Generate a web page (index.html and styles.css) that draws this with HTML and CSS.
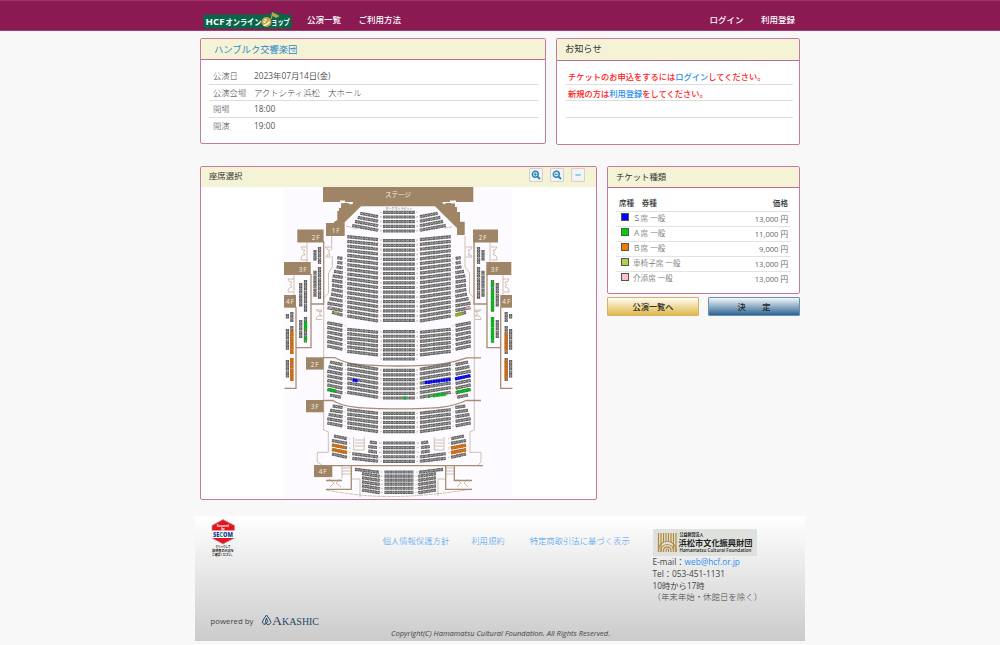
FILE: index.html
```
<!DOCTYPE html>
<html lang="ja">
<head>
<meta charset="utf-8">
<title>HCFオンラインショップ</title>
<link rel="stylesheet" href="styles.css">
</head>
<body>
<header class="topbar">
  <div class="topbar-inner">
    <svg class="logo" width="90" height="20" viewBox="0 0 90 20">
      <rect x="0.5" y="4.5" width="88" height="14" rx="2" fill="#086548"/>
      <path d="M65 6 Q68 0 73 2 L78 4 L84 5 L86 8 L66 8Z" fill="#086548"/>
      <circle cx="63.500" cy="12" r="5" fill="#c5a34c"/>
      <path d="M69 2.500L76 6L73 7.500L69.500 5.500L67.500 10" fill="#c5a34c" stroke="#c5a34c" stroke-width=".8"/>
      <g class="logo-text">
        <text x="2.5" y="14.8" textLength="19" lengthAdjust="spacingAndGlyphs">HCF</text>
        <text x="22.5" y="14.8" textLength="36" lengthAdjust="spacingAndGlyphs">オンライン</text>
        <text x="59.5" y="14.8" textLength="8" lengthAdjust="spacingAndGlyphs">シ</text>
        <text x="68.3" y="14.8" textLength="18.5" lengthAdjust="spacingAndGlyphs">ョップ</text>
      </g>
    </svg>
    <nav class="nav"><a>公演一覧</a><a>ご利用方法</a></nav>
    <nav class="nav nav-right"><a>ログイン</a><a>利用登録</a></nav>
  </div>
</header>

<main class="page">
  <div class="row row-info">
    <section class="panel event">
      <h2 class="panel-head event-title">ハンブルク交響楽団</h2>
      <dl class="facts">
        <div><dt>公演日</dt><dd class="num">2023年07月14日(金)</dd></div>
        <div><dt>公演会場</dt><dd>アクトシティ浜松　大ホール</dd></div>
        <div><dt>開場</dt><dd class="num">18:00</dd></div>
        <div><dt>開演</dt><dd class="num">19:00</dd></div>
      </dl>
    </section>
    <section class="panel news">
      <h2 class="panel-head">お知らせ</h2>
      <ul class="news-list">
        <li>チケットのお申込をするには<a>ログイン</a>してください。</li>
        <li>新規の方は<a>利用登録</a>をしてください。</li>
        <li></li>
      </ul>
    </section>
  </div>

  <div class="row row-seat">
    <section class="panel seats">
      <div class="panel-head seat-head">
        <h2>座席選択</h2>
        <div class="tools">
          <button><svg width="10" height="10" viewBox="0 0 10 10"><circle cx="4.3" cy="4.3" r="3" class="glass"/><path d="M6.6 6.6L9 9" class="handle"/><path d="M2.8 4.3H5.8M4.3 2.8V5.8" class="sign"/></svg></button>
          <button><svg width="10" height="10" viewBox="0 0 10 10"><circle cx="4.3" cy="4.3" r="3" class="glass"/><path d="M6.6 6.6L9 9" class="handle"/><path d="M2.8 4.3H5.8" class="sign"/></svg></button>
          <button><svg width="10" height="10" viewBox="0 0 10 10"><path d="M2.4 5H7.6" class="minus"/></svg></button>
        </div>
      </div>
      <svg class="map" id="map" width="228" height="311" viewBox="284 187 228 311">
        <rect x="284" y="187" width="228" height="311" fill="#fdfbff"/>
        <g class="thin">
          <path d="M331.7 236V250M332.3 256V267L328.5 273V293L323.7 298M323.7 304V430L328.3 431.7V452.3H317.3V462L322 465"/>
          <path d="M465 236V267L469.5 273V293L474 298M474.3 242V430L470 431.7V452.3H481V462L478 465"/>
          <path d="M301 247H307M301 247Q302 251 305 250Q302 252 305 255Q301 254 301 260H307M307 242V262M325 247H331M326 247Q327 251 330 250Q327 252 330 255Q326 254 326 257H331"/>
          <path d="M497 247H491M497 247Q496 251 493 250Q496 252 493 255Q497 254 497 260H491M490 242V262M472 247H466M472 247Q471 251 468 250Q471 252 468 255Q472 254 472 257H466"/>
          <path d="M288 279H294M288 279Q289 283 292 282Q289 285 292 287Q288 287 288 292H293M294 275V295M509 279H503M509 279Q508 283 505 282Q508 285 505 287Q509 287 509 292H504M503 275V295"/>
          <path d="M316 310H322M316 310Q319 313 322 311Q317 314 322 316Q316 315 316 319.500H322M481 310H475M481 310Q478 313 475 311Q480 314 475 316Q481 315 481 319.500H475"/>
          <path d="M353.7 437V450H364.3V437M355 440H364M355 443H364M355 446H364M434.3 437V450H444V437M435 440H443M435 443H443M435 446H443"/>
          <path d="M342 465V478M342 468H351M342 471H351M342 474H351M445.7 468H454M445.7 471H454M445.7 474H454"/>
          <path d="M351.5 479H360V497M445 479H438V496M329 479L334 483L330 487M340 479L336 483L341 487M457 479L461 483L457 487M468 479L464 483L468 487"/>
          <path d="M326 490Q365 497.500 399 496.500T472 489M346 226L357 229M444 228L452 227" stroke-dasharray="4 .7"/>
        </g>
        <g class="wall">
          <path d="M323.7 241V304H311.5M311 274V347.7H296M296 307V388.3H284.5"/>
          <path d="M474 241V304H486.7M487 274V347.7H500.5M500.7 307V388.3H512.5"/>
          <path d="M323 357.7H335C346 364 360 366 399 366S452 363 466.7 357.8H481"/>
          <path d="M323 400.5H333C342 407 360 408.8 399 408.8S453 407 466 400.5H481"/>
          <path d="M314 465.6H483M351.3 466V489.3H326M326 480.500H342M445.7 466V489.3H472M454.3 466V480.500H472"/>
        </g>
        <path class="block" d="M323 187V202H341V208H339V211H337.3V220L334 222V223H326V236H344.7V222.3L361 206.3H435L457 228V235H464.7V221.7H460V212H457V207H455V202H473.3V187Z"/>
        <path d="M340 200.5H345V202H353V203.5L350.5 204.5L348 203H344L340 203.5ZM442 202H450V200.5H456V203.5H451V203H446L444 204.5Z" fill="#fdfbff"/>
        <g class="block">
          <rect x="297.3" y="229.5" width="26.3" height="13"/><rect x="473" y="229.5" width="25" height="13"/>
          <rect x="284" y="262" width="26.7" height="13"/><rect x="486.3" y="262" width="25" height="13"/>
          <rect x="284" y="295" width="12" height="12.7"/><rect x="500.3" y="295" width="11.7" height="12.7"/>
          <rect x="306" y="357.3" width="17.7" height="12.3"/><rect x="306" y="400" width="17.7" height="12.3"/>
          <rect x="314" y="465.3" width="18.3" height="11.8"/>
        </g>
        <g id="seats"></g>
        <g class="map-label">
          <text x="398" y="197" textLength="26">ステージ</text>
          <text x="336" y="232.5">1F</text><text x="316" y="240">2F</text><text x="483" y="240">2F</text>
          <text x="303" y="272">3F</text><text x="495" y="272">3F</text>
          <text x="290.3" y="304">4F</text><text x="506.7" y="304">4F</text>
          <text x="315" y="366.5">2F</text><text x="315" y="409">3F</text><text x="323" y="474">4F</text>
        </g>
        <text x="399" y="210" class="pit">オーケストラピット</text>
      </svg>
    </section>

    <aside class="side">
      <section class="panel tickets">
        <h2 class="panel-head">チケット種類</h2>
        <table class="prices">
          <thead><tr><th>席種　券種</th><th>価格</th></tr></thead>
          <tbody>
            <tr><td><i class="chip chip-s"></i>Ｓ席 一般</td><td>13,000 円</td></tr>
            <tr><td><i class="chip chip-a"></i>Ａ席 一般</td><td>11,000 円</td></tr>
            <tr><td><i class="chip chip-b"></i>Ｂ席 一般</td><td>9,000 円</td></tr>
            <tr><td><i class="chip chip-w"></i>車椅子席 一般</td><td>13,000 円</td></tr>
            <tr><td><i class="chip chip-c"></i>介添席 一般</td><td>13,000 円</td></tr>
          </tbody>
        </table>
      </section>
      <div class="actions">
        <button class="btn btn-back">公演一覧へ</button>
        <button class="btn btn-ok">決　　定</button>
      </div>
    </aside>
  </div>
</main>

<footer class="footer">
  <div class="foot-left">
    <svg width="26" height="40" viewBox="0 0 26 40">
      <path d="M12 .5L23.500 6.500V19L12 25L1 19V6.500Z" fill="#e6141e" stroke="#a99" stroke-width=".7"/>
      <rect x=".5" y="11.500" width="23.500" height="7.500" fill="#fff"/>
      <text x="12" y="7.500" class="seal-top">Secured</text><text x="12" y="10.700" class="seal-top">by</text>
      <text x="2" y="17.600" class="seal-name" textLength="20" lengthAdjust="spacingAndGlyphs">SE<tspan fill="#0a9b7a">C</tspan>OM</text>
      <text x="12" y="28.800" class="seal-note" textLength="15" lengthAdjust="spacingAndGlyphs">クリックして</text>
      <text x="12" y="32.800" class="seal-note" textLength="22" lengthAdjust="spacingAndGlyphs">証明書の内容を</text>
      <text x="12" y="36.800" class="seal-note" textLength="22" lengthAdjust="spacingAndGlyphs">ご確認ください。</text>
    </svg>
    <div class="powered"><span>powered by</span>
      <svg width="60" height="13" viewBox="0 0 60 13">
        <path d="M5.500 1C4 4 1 6 1.500 9Q2.500 11 5 10Q8 8 5.500 4Q4 7 5 10M5.500 1Q9 5 10 8.500Q9 11 6 10.500" fill="none" stroke="#274766" stroke-width="1"/>
        <g class="akashic"><text x="11" y="10.500" font-size="12" textLength="10" lengthAdjust="spacingAndGlyphs">A</text><text x="21" y="10.500" font-size="9.300" textLength="37" lengthAdjust="spacingAndGlyphs">KASHIC</text></g>
      </svg>
    </div>
  </div>
  <div class="foot-mid">
    <nav class="foot-links"><a>個人情報保護方針</a><a>利用規約</a><a>特定商取引法に基づく表示</a></nav>
    <p class="copyright">Copyright(C) Hamamatsu Cultural Foundation. All Rights Reserved.</p>
  </div>
  <address class="contact">
    <svg width="104" height="27" viewBox="0 0 104 27">
      <rect width="104" height="27" fill="#dfe1dd"/>
      <g fill="none" stroke="#b18a3e" stroke-width="1.200">
        <path d="M5.500 4V23M8 4V23M10.500 4V14M13 4V12M15.500 4V12M18 4V14M20.500 4V23M23 4V23"/>
        <path d="M5.500 23V21A8.700 8.700 0 0 1 23 21V23M8 23V21A6.300 6.300 0 0 1 20.500 21V23M10.500 23V21A3.800 3.800 0 0 1 18 21V23M13 23V21A1.200 1.200 0 0 1 15.500 21V23"/>
      </g>
      <g class="hcf">
        <text x="26.500" y="7.300" font-size="4.200" textLength="24" lengthAdjust="spacingAndGlyphs">公益財団法人</text>
        <text x="25.500" y="16.600" font-size="8.400" textLength="74" lengthAdjust="spacingAndGlyphs">浜松市文化振興財団</text>
        <text x="26.500" y="23" font-size="4.800" textLength="72" lengthAdjust="spacingAndGlyphs">Hamamatsu Cultural Foundation</text>
      </g>
    </svg>
    <p>E-mail：<a>web@hcf.or.jp</a></p>
    <p>Tel：053-451-1131</p>
    <p>10時から17時</p>
    <p class="closed">（年末年始・休館日を除く）</p>
  </address>
</footer>
<script src="seats.js"></script>
</body>
</html>
```

FILE: styles.css
```
* { box-sizing: border-box; margin: 0; padding: 0; }
body {
  background: #f8f8f8;
  color: #444;
  font: 300 8.3px/12px "Open Sans", "Noto Sans CJK JP", sans-serif;
}
h2 { font-weight: 400; }
ul { list-style: none; }
svg { display: block; overflow: visible; }

.topbar { height: 31px; background: #8b1a53; border-top: 1px solid #98366a; border-bottom: 1px solid #a13c70; }
.topbar-inner { display: flex; align-items: flex-start; width: 610px; margin: 0 auto; padding: 9px 10px 0 8px; }
.logo-text { font: 700 8.5px "Open Sans", "Noto Sans CJK JP", sans-serif; fill: #fff; }
.nav { display: flex; gap: 17.5px; padding: 2.5px 0 0 14px; color: #fff; font-size: 8.5px; line-height: 14px; font-weight: 500; }
.nav-right { margin-left: auto; }

.page { width: 600px; margin: 7px auto 0 200px; }
.row { display: flex; align-items: flex-start; }
.row-info { gap: 10px; height: 128px; }
.row-seat { gap: 10px; height: 350px; }
.panel { background: #fff; border: 1px solid #c57b9f; border-radius: 2px; }
.panel-head { height: 21px; padding: 0 8px; background: #f4f3d5; border-bottom: 1px solid #bd6c94; color: #333; font-size: 8.4px; line-height: 19px; }

.event { width: 346px; height: 106px; }
.event-title { padding-left: 13px; font-size: 9.3px; line-height: 22px; color: #2f88cb; }
.facts { padding: 8px 6px 0 8px; }
.facts div { display: flex; height: 16.6px; padding-left: 4px; border-bottom: 1px solid #ddd; line-height: 15.5px; }
.facts div:last-child { border: 0; }
.facts dt { width: 41px; }
.facts dd { font-size: 8.35px; }
.facts .num { font-weight: 400; color: #555; }

.news { width: 244px; height: 107px; }
.news .panel-head { font-size: 9.2px; height: 22px; line-height: 20px; }
.news-list { padding: 7px 6px 0 9px; }
.news-list li { height: 16.7px; padding-left: 2px; border-bottom: 1px solid #ddd; line-height: 17px; font-size: 8.25px; font-weight: 500; color: #ff2020; white-space: nowrap; }
.news-list a { color: #1e8cf0; }

.seats { width: 397px; height: 334px; }
.seat-head { display: flex; justify-content: space-between; height: 20px; padding: 0 12px 0 8px; border: 0; }
.seat-head h2 { font-size: 8.4px; line-height: 18.5px; }
.tools { display: flex; gap: 7px; padding-top: 1px; }
.tools button { display: grid; place-items: center; width: 14px; height: 14px; border: 1px solid #d2d2cc; border-radius: 1px; background: #f3f3f3; }
.tools { margin-right: -1px; }
.glass { fill: #d6ecf8; stroke: #2b83b5; stroke-width: 1.400; }
.handle { stroke: #2b83b5; stroke-width: 1.800; }
.sign { stroke: #2b83b5; stroke-width: 1; }
.minus { stroke: #54b4dd; stroke-width: 1.200; }

.map { margin-left: 83px; }
.block { fill: #9f8566; }
.thin { fill: none; stroke: #b9a78f; stroke-width: .7; }
.wall { fill: none; stroke: #a58d70; stroke-width: 1.300; }
.map-label { fill: #f5efe5; font: 400 6.5px "Open Sans", "Noto Sans CJK JP", sans-serif; text-anchor: middle; }
.map-label text:not(:first-child) { letter-spacing: .8px; }
.pit { fill: #5c4a38; font: 400 3px "Noto Sans CJK JP", sans-serif; text-anchor: middle; }
.seat { fill: none; stroke: #5c5c5c; stroke-width: 3.200; stroke-dasharray: 2.300 .3; }
.cushion { fill: none; stroke: #b4b4b4; stroke-width: 1; stroke-dasharray: 1.100 1.500; stroke-dashoffset: -.6; }
.rownum { fill: none; stroke: #d8c3b5; stroke-width: 1.300; }

.side { width: 193px; }
.tickets { height: 128px; }
.tickets .panel-head { height: 21px; font-size: 8.4px; }
.prices { width: 175px; margin: 8px 0 0 8px; border-collapse: collapse; font-size: 7.6px; }
.prices tr { height: 15px; border-top: 1px solid #e3e3e3; }
.prices thead tr { border: 0; }
.prices th { text-align: left; color: #333; font-weight: 500; padding-left: 3px; line-height: 13px; }
.prices td { line-height: 13px; padding-left: 5px; white-space: nowrap; }
.prices th:last-child, .prices td:last-child { text-align: right; padding-right: 3px; }
.prices td:last-child { font-weight: 400; color: #666; padding-top: 1px; }
.chip { display: inline-block; width: 8px; height: 8px; margin-right: 4px; border: 1px solid #555; vertical-align: 0; }
.chip-s { background: #00f; }
.chip-a { background: #00d200; }
.chip-b { background: #f57600; }
.chip-w { background: #a9d348; }
.chip-c { background: #ffbfc9; }

.actions { display: flex; justify-content: space-between; padding-top: 3px; }
.btn { height: 19px; width: 92px; border-radius: 1px; font: 500 8.2px/16px "Open Sans", "Noto Sans CJK JP", sans-serif; color: #222; }
.btn-back { border: 1px solid #dcae6a; background: linear-gradient(#fffdf3, #e0b94b); }
.btn-ok { border: 1px solid #6b8fae; background: linear-gradient(#f5f8fb, #2c6492); }

.footer { display: flex; width: 610px; height: 125px; margin-left: 195px; background: linear-gradient(#fff, #cbcbcb); }
.foot-left { display: flex; flex-direction: column; justify-content: space-between; width: 187px; padding: 3px 0 14px 15.5px; }
.powered { display: flex; align-items: center; gap: 8px; font-size: 7.8px; font-weight: 400; }
.seal-top { fill: #fff; font: 700 3px "Open Sans", sans-serif; text-anchor: middle; }
.seal-name { fill: #1d3d9b; font: 800 6px "Open Sans", sans-serif; }
.seal-note { fill: #222; font: 700 3.3px "Noto Sans CJK JP", sans-serif; text-anchor: middle; }
.akashic { fill: #274766; font-family: "Liberation Serif", serif; }
.foot-mid { display: flex; flex-direction: column; justify-content: space-between; width: 270px; padding: 17.5px 0 2px; }
.foot-links { display: flex; gap: 22px; padding-left: .5px; font-size: 8.35px; line-height: 14px; color: #3d9bee; white-space: nowrap; }
.foot-links a:last-child { margin-left: 3px; }
.copyright { padding-left: 9px; font-size: 7.5px; font-style: italic; font-weight: 400; white-space: nowrap; }
.contact { padding: 13px 0 0 .5px; font-style: normal; font-size: 8.3px; font-weight: 400; line-height: 11.8px; white-space: nowrap; }
.contact a { color: #2a8ff0; }
.hcf { fill: #222; font-family: "Open Sans", "Noto Sans CJK JP", sans-serif; font-weight: 600; }
.contact .closed { font-size: 8.45px; font-weight: 300; }
```

FILE: seats.js
```
// Draws the hall's seat rows; every row is a dashed line, one dash per seat.
const NS = "http://www.w3.org/2000/svg";
const layer = document.getElementById("seats");
const MIRROR = 798;

function path(d, cls, color) {
  const p = document.createElementNS(NS, "path");
  p.setAttribute("d", d);
  p.setAttribute("class", cls);
  if (color) p.style.stroke = color;
  layer.appendChild(p);
}
function line(x1, y1, x2, y2, color) {
  const d = `M${x1} ${y1}L${x2} ${y2}`;
  path(d, "seat", color);
  if (!color) path(d, "cushion");
}
function both(x1, y1, x2, y2) {
  line(x1, y1, x2, y2);
  line(MIRROR - x1, y1, MIRROR - x2, y2);
}
function centre(first, last, rows, x1 = 383, x2 = 415) {
  for (let i = 0; i < rows; i++) {
    const y = first + (last - first) * i / (rows - 1);
    line(x1, y, x2, y);
    for (const x of [380.5, 416.5]) path(`M${x} ${y}h1.2`, "rownum");
  }
}
// l1/r1: left and right heights of the first row, l2/r2: of the last row
function wing(x1, x2, l1, r1, l2, r2, rows, starts = []) {
  for (let i = 0; i < rows; i++) {
    const t = i / (rows - 1);
    both(starts[i] || x1, l1 + (l2 - l1) * t, x2, r1 + (r2 - r1) * t);
    const y = r1 + (r2 - r1) * t;
    for (const x of [x2 + 2, MIRROR - x2 - 3]) path(`M${x} ${y}h1.2`, "rownum");
  }
}

centre(212.3, 231, 5);
centre(240.7, 320.3, 18);
centre(331.7, 359, 7);
centre(370.3, 398, 7);
centre(413.3, 431.7, 5);
centre(443, 461.3, 5);
centre(472, 492.3, 6, 384.5, 413.5);

wing(352.3, 378.3, 213.3, 216.7, 225.5, 230.3, 4, [360.3, 357.7, 355]);
wing(347.3, 378.3, 236.7, 239.7, 316, 321, 18);
wing(347.3, 378.3, 329.3, 332.3, 351.3, 355, 6);
wing(347.3, 378.3, 364.3, 369.3, 392.3, 397.3, 7);
wing(347.3, 378.3, 409.7, 413.3, 427.3, 431.7, 5);
wing(368.3, 377, 442, 443, 451, 452.3, 3, [369.8]);
wing(352.3, 378.3, 453.7, 457, 458.3, 461.3, 2);
wing(362, 379.7, 473.7, 476.3, 490, 492.7, 5);
both(355, 469.3, 379, 472.3);

wing(332, 342.7, 257.7, 258.5, 312.3, 315.3, 13,
  [337.3, 337.3, 336.6, 334, 332.7, 332, 332, 331.7, 331, 329.5, 327.5, 327.5, 332]);
wing(327.3, 342.7, 322.7, 325.7, 346, 349.3, 6);
wing(327.3, 342.7, 362, 364.7, 389.5, 393, 7, [330, 328.6]);
both(330, 395, 341, 397.3);
wing(327.3, 342.7, 406, 407.5, 423, 426, 5, [332.7, 330, 328.6]);
wing(332, 347, 436, 438.7, 454, 457.3, 5, [334]);

// Side balconies
for (const [x, a, b] of [
  [315, 250, 261], [319.5, 247, 264], [315, 270.7, 297], [319.5, 267, 299],
  [300.7, 283, 307], [305.5, 280, 312], [300.7, 320, 338], [305.5, 317, 342.5],
  [287.4, 314, 318.5], [287.4, 329, 350], [287.4, 360, 377.5],
  [291.8, 312, 322], [291.8, 326, 354], [291.8, 358, 381]
]) both(x, a, x, b);

// Seats on sale
const S = "#0000f0", A = "#00b812", B = "#d96a05", W = "#91b51b", C = "#dd9ca8";
for (const [x1, y1, x2, y2, c] of [
  [352.6, 380, 358, 381, S], [425, 382.7, 450.5, 379.5, S], [455, 379, 470, 375.6, S],
  [328, 389.3, 336, 391, A], [457, 392, 470, 389.3, A], [428, 396.5, 430.5, 396.2, A],
  [433, 395.8, 446, 394.3, A], [403.5, 398, 406.5, 398, A],
  [305.5, 321.7, 305.5, 330, A], [305.5, 336.7, 305.5, 340.7, A],
  [492.5, 282, 492.5, 287, A], [492.5, 290, 492.5, 311, A], [492.5, 317, 492.5, 342.5, A],
  [291.8, 331, 291.8, 354, B], [291.8, 358, 291.8, 381, B],
  [506.2, 333, 506.2, 350, B], [506.2, 360, 506.2, 379, B],
  [332.5, 445, 345, 447.5, B], [332.5, 449.5, 347, 452.5, B],
  [451, 448.3, 466, 445.5, B], [451, 453, 466, 450, B],
  [335, 313, 337.5, 313.6, W], [455.5, 315, 462, 313.2, W],
  [329.5, 307, 332, 307.5, C], [466, 308, 470, 307, C]
]) line(x1, y1, x2, y2, c);
```
